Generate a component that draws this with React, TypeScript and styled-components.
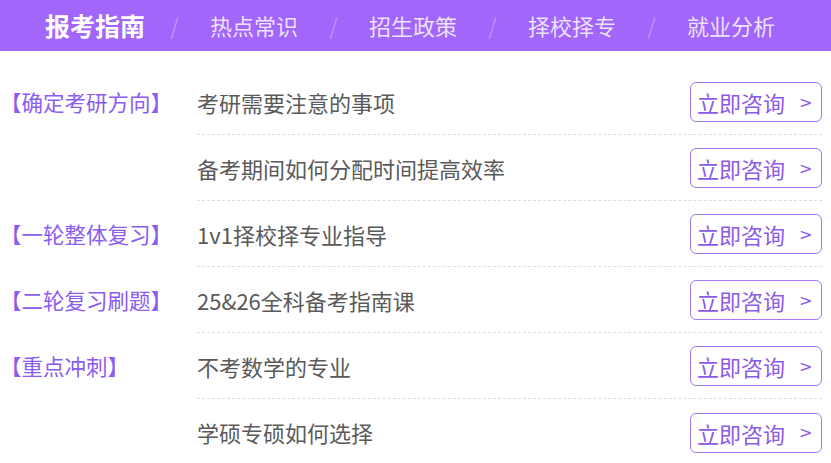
import React from 'react'
import styled, { createGlobalStyle } from 'styled-components'

const GlobalStyle = createGlobalStyle`
  html, body {
    margin: 0;
    padding: 0;
    background: #fff;
  }
  body {
    font-family: 'Noto Sans CJK SC', 'Noto Sans', sans-serif;
  }
`

const tabs = ['报考指南', '热点常识', '招生政策', '择校择专', '就业分析']

const groups = [
  { label: '【确定考研方向】', items: ['考研需要注意的事项', '备考期间如何分配时间提高效率'] },
  { label: '【一轮整体复习】', items: ['1v1择校择专业指导'] },
  { label: '【二轮复习刷题】', items: ['25&26全科备考指南课'] },
  { label: '【重点冲刺】', items: ['不考数学的专业', '学硕专硕如何选择'] },
]

const App = () => {
  const lastGroup = groups.length - 1
  return (
    <Page>
      <GlobalStyle />
      <TabBar>
        {tabs.map((t, i) => (
          <React.Fragment key={t}>
            {i > 0 && <Slash>/</Slash>}
            <Tab active={i === 0}>{t}</Tab>
          </React.Fragment>
        ))}
      </TabBar>
      <List>
        {groups.map((g, gi) => (
          <Group key={g.label}>
            <Label>{g.label}</Label>
            <Items>
              {g.items.map((item, ii) => (
                <Item key={item} last={gi === lastGroup && ii === g.items.length - 1}>
                  <Title>{item}</Title>
                  <ConsultButton>
                    立即咨询<Arrow>&gt;</Arrow>
                  </ConsultButton>
                </Item>
              ))}
            </Items>
          </Group>
        ))}
      </List>
    </Page>
  )
}

export default App

const Page = styled.div`
  width: 831px;
  height: 463px;
  overflow: hidden;
  background: #fff;
`

const TabBar = styled.div`
  height: 51px;
  background: #a266fa;
  display: flex;
  align-items: center;
  padding-left: 31px;
`

const Tab = styled.div<{ active?: boolean }>`
  width: 128px;
  text-align: center;
  color: ${(p) => (p.active ? '#ffffff' : 'rgba(255, 255, 255, 0.82)')};
  font-size: ${(p) => (p.active ? '25px' : '22px')};
  font-weight: ${(p) => (p.active ? 700 : 400)};
  line-height: 51px;
  white-space: nowrap;
`

const Slash = styled.span`
  width: 31px;
  text-align: center;
  color: rgba(255, 255, 255, 0.3);
  font-size: 22px;
  line-height: 51px;
`

const List = styled.div`
  padding: 18px 9px 0 0;
`

const Group = styled.div`
  display: grid;
  grid-template-columns: 197px 1fr;
`

const Label = styled.div`
  color: #8b5cf0;
  font-size: 21.5px;
  line-height: 66px;
  height: 66px;
  white-space: nowrap;
`

const Items = styled.div`
  display: flex;
  flex-direction: column;
`

const Item = styled.div<{ last?: boolean }>`
  height: 66px;
  box-sizing: border-box;
  display: flex;
  align-items: center;
  justify-content: space-between;
  border-bottom: ${(p) => (p.last ? 'none' : '1px dashed #dedede')};
`

const Title = styled.span`
  color: #5a5a5a;
  font-size: 22px;
`

const ConsultButton = styled.div`
  width: 132px;
  height: 40px;
  box-sizing: border-box;
  border: 1px solid #a27af3;
  border-radius: 6px;
  display: flex;
  align-items: center;
  padding-left: 6px;
  color: #8a5ae8;
  font-size: 22px;
  margin-top: 1px;
`

const Arrow = styled.span`
  font-size: 16px;
  margin-left: 14px;
  font-family: 'DejaVu Sans', sans-serif;
`
